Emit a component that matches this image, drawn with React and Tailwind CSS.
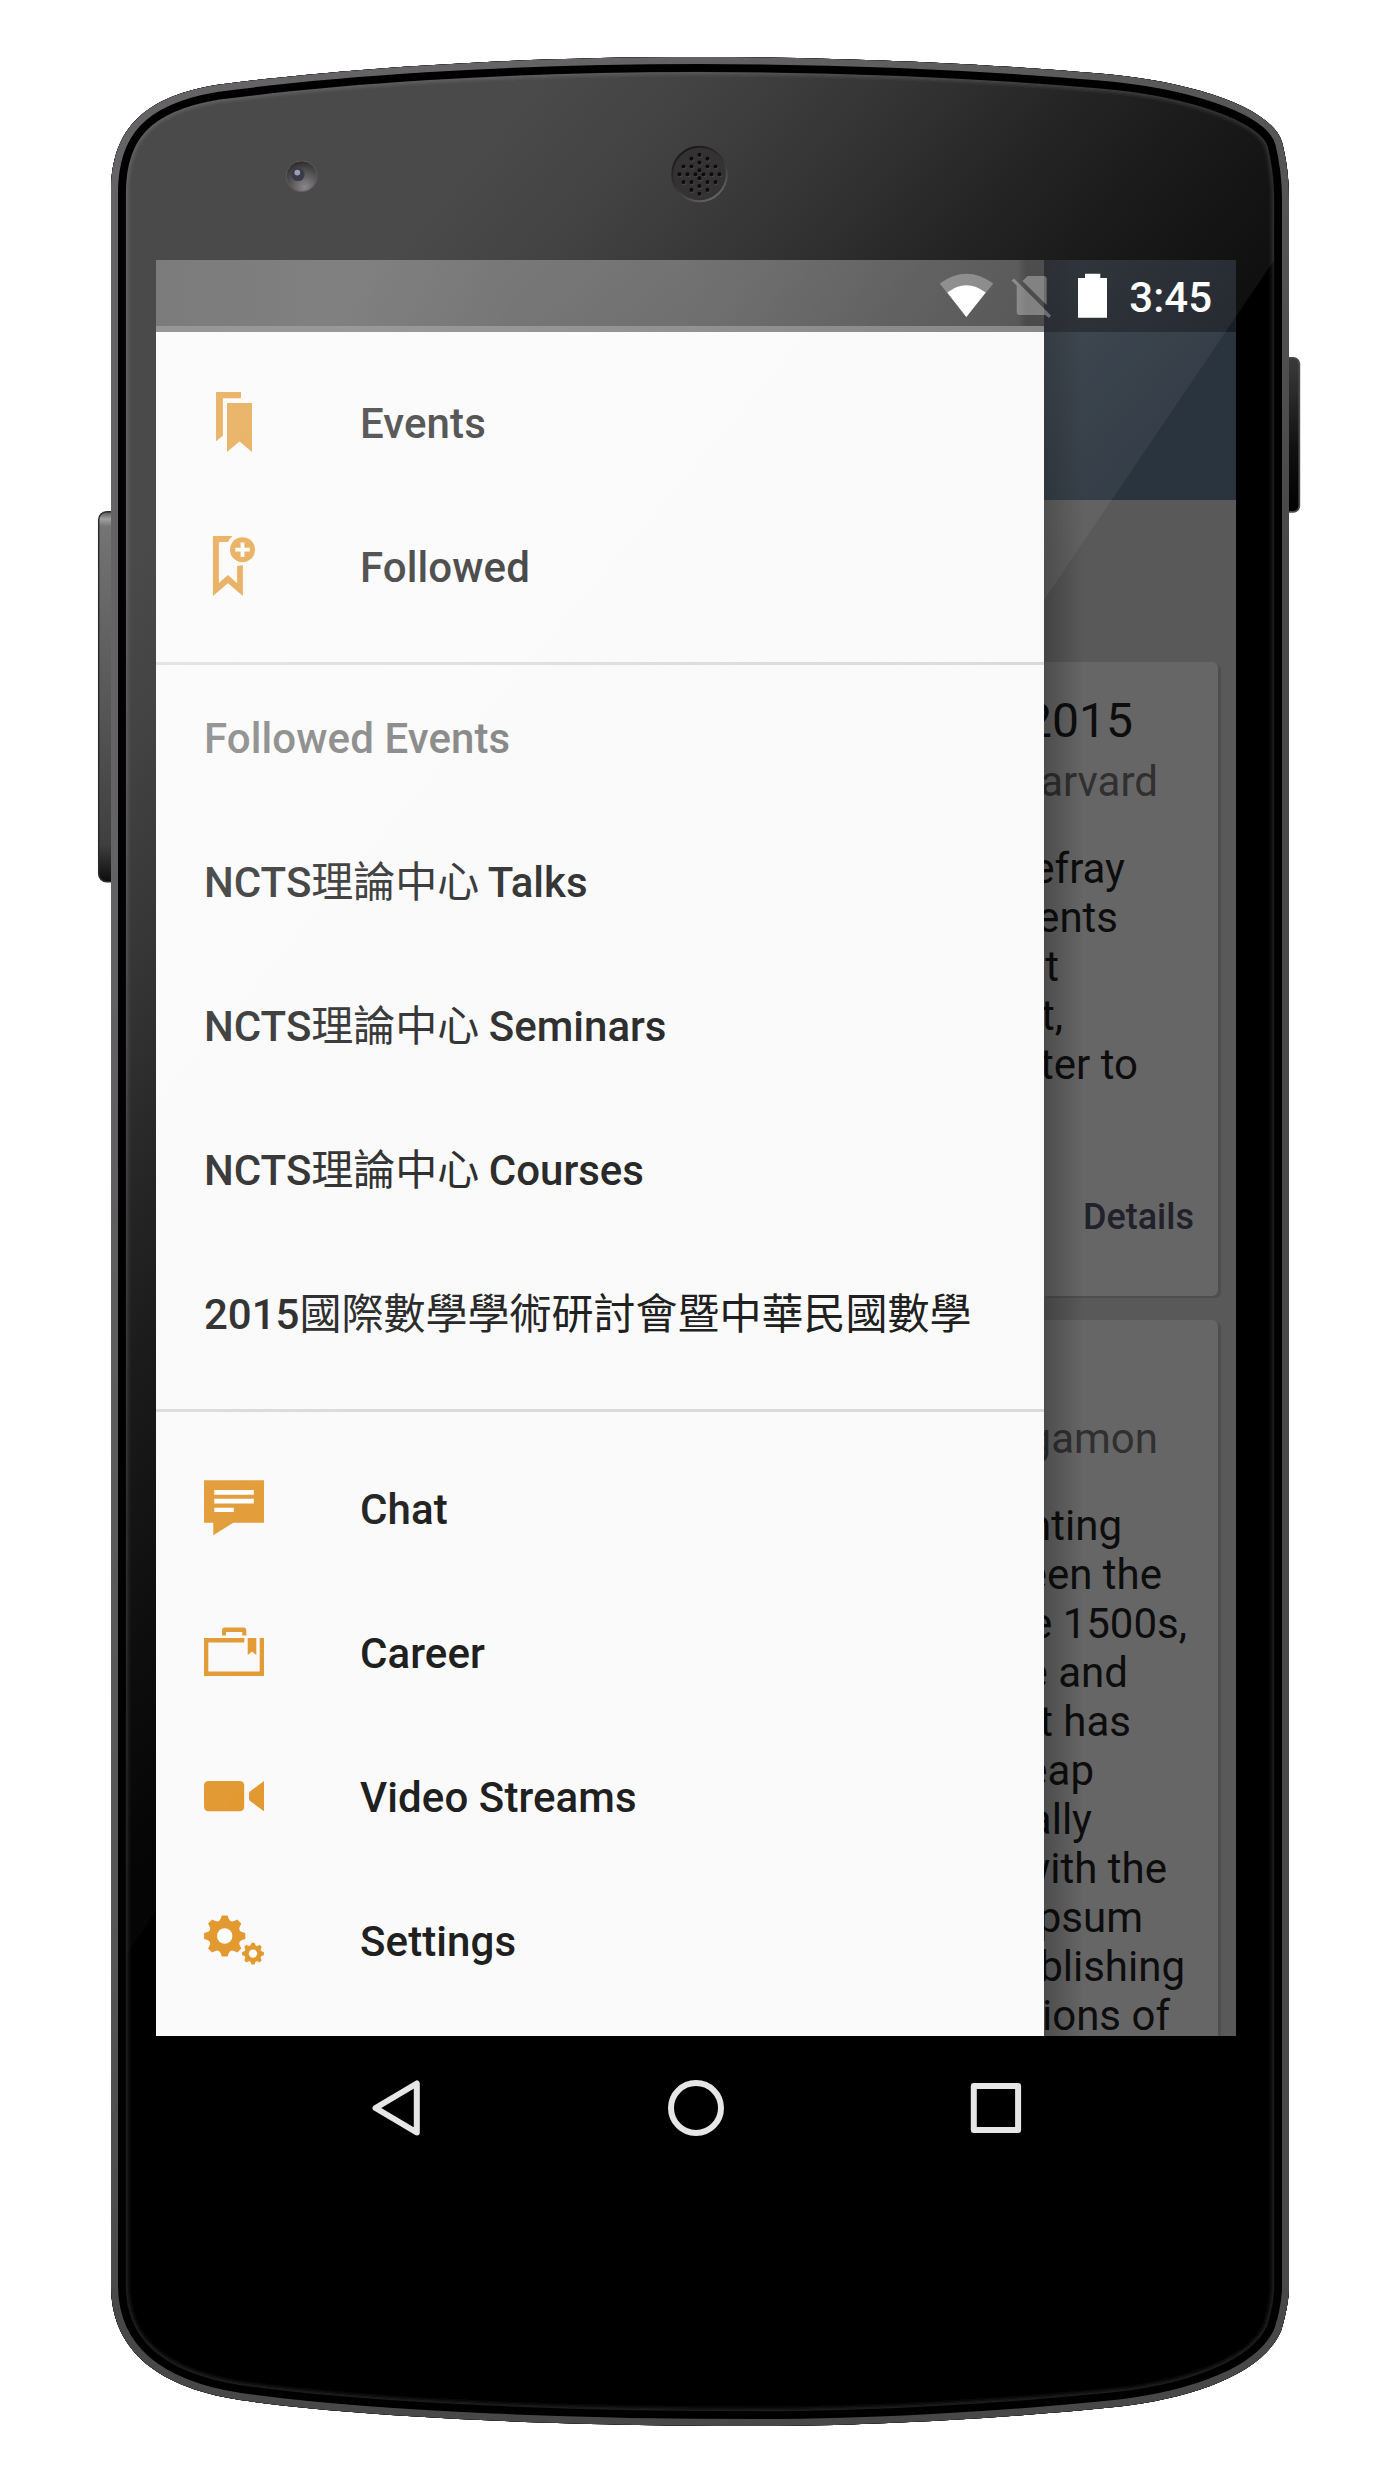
import React from "react";

const BODY =
  "M111 190 C112 134 138 98 216 85 C330 70 500 57 698 57 C860 57 1000 65 1100 73.5 C1180 80 1270 104 1282 142 C1286 158 1289 175 1289 200 V2291 C1288 2305 1284 2322 1281 2331 C1262 2375 1190 2398 1120 2406.5 C1000 2419 860 2426 760 2426 C600 2426 380 2420 240 2400 C150 2386 111 2345 111 2285 Z";

const SPEAKER_ROWS = [
  [-5, [0]],
  [-4, [-8, 8]],
  [-3, [0]],
  [-2, [-16, -8, 8, 16]],
  [-1, [0]],
  [0, [-20, -12, -4, 4, 12, 20]],
  [1, [0]],
  [2, [-16, -8, 8, 16]],
  [3, [0]],
  [4, [-8, 8]],
  [5, [0]],
];

function DeviceBody() {
  return (
    <svg className="absolute inset-0" width="1400" height="2489" viewBox="0 0 1400 2489">
      <defs>
        <clipPath id="body-clip">
          <path d={BODY} />
        </clipPath>
        <linearGradient id="frame" gradientUnits="userSpaceOnUse" x1="1200" y1="700" x2="473" y2="213">
          <stop offset="0" stopColor="#484848" />
          <stop offset="0.25" stopColor="#565556" />
          <stop offset="1" stopColor="#656365" />
        </linearGradient>
        <linearGradient id="volume" x1="0" y1="0" x2="0" y2="1">
          <stop offset="0" stopColor="#555" />
          <stop offset="0.02" stopColor="#a0a0a0" />
          <stop offset="0.04" stopColor="#747474" />
          <stop offset="0.4" stopColor="#5e5e5e" />
          <stop offset="0.9" stopColor="#3f3f3f" />
          <stop offset="1" stopColor="#0c0c0c" />
        </linearGradient>
        <linearGradient id="power" x1="0" y1="0" x2="0" y2="1">
          <stop offset="0" stopColor="#3a3a3a" />
          <stop offset="0.6" stopColor="#101010" />
          <stop offset="1" stopColor="#000" />
        </linearGradient>
        <filter id="soft" x="-5%" y="-5%" width="110%" height="110%">
          <feGaussianBlur stdDeviation="2" />
        </filter>
      </defs>
      <rect x="98.7" y="511.7" width="22" height="370" rx="8" fill="url(#volume)" stroke="#2c2c2c" strokeWidth="1.5" />
      <rect x="1276" y="357.8" width="23.3" height="154" rx="6" fill="url(#power)" stroke="#4a4a4a" strokeWidth="1.8" />
      <path d={BODY} fill="#000" />
      <g clipPath="url(#body-clip)">
        <path d={BODY} fill="none" stroke="#262626" strokeWidth="34" filter="url(#soft)" />
        <path d={BODY} fill="none" stroke="#1c1c1c" strokeWidth="31" />
        <path d={BODY} fill="none" stroke="#000" strokeWidth="29.5" />
        <path d={BODY} fill="none" stroke="url(#frame)" strokeWidth="14" />
      </g>
    </svg>
  );
}

/* Diagonal reflection that covers the upper left part of the glass. */
function Gloss() {
  return (
    <svg className="pointer-events-none absolute inset-0" width="1400" height="2489" viewBox="0 0 1400 2489">
      <defs>
        <linearGradient id="gloss" gradientUnits="userSpaceOnUse" x1="1143" y1="684" x2="495" y2="135">
          <stop offset="0" stopColor="#fff" stopOpacity="0.02" />
          <stop offset="0.153" stopColor="#fff" stopOpacity="0.05" />
          <stop offset="0.38" stopColor="#fff" stopOpacity="0.104" />
          <stop offset="0.514" stopColor="#fff" stopOpacity="0.145" />
          <stop offset="0.647" stopColor="#fff" stopOpacity="0.195" />
          <stop offset="0.86" stopColor="#fff" stopOpacity="0.262" />
          <stop offset="1" stopColor="#fff" stopOpacity="0.29" />
        </linearGradient>
        <radialGradient id="camera" cx="0.6" cy="0.85" r="0.85">
          <stop offset="0" stopColor="#8a868a" />
          <stop offset="0.5" stopColor="#5c595b" />
          <stop offset="1" stopColor="#2c2b2c" />
        </radialGradient>
        <linearGradient id="speaker-ring" x1="0.2" y1="0" x2="0.8" y2="1">
          <stop offset="0" stopColor="#151515" />
          <stop offset="0.5" stopColor="#333" />
          <stop offset="1" stopColor="#6a6a6a" />
        </linearGradient>
        <mask id="glass">
          <path d={BODY} fill="#fff" stroke="#000" strokeWidth="30" />
        </mask>
      </defs>
      <g mask="url(#glass)">
        <path d="M100 40 H1300 V222 L1044 600 L100 1993.500 Z" fill="url(#gloss)" />
      </g>
      <circle cx="301.700" cy="176.300" r="15.500" fill="url(#camera)" stroke="#5c5c5c" strokeWidth="1" />
      <circle cx="298" cy="174.500" r="6.600" fill="#3a3b48" />
      <circle cx="297.300" cy="172.600" r="2.900" fill="#9c9db0" />
      <circle cx="699.500" cy="174" r="27.300" fill="#343233" stroke="url(#speaker-ring)" strokeWidth="2" />
      {SPEAKER_ROWS.map(([row, xs]) =>
        xs.map((x) => (
          <g key={row + "," + x}>
            <circle cx={700 + x} cy={175 + row * 3.9} r="2.300" fill="#4c4c4c" />
            <circle cx={699.5 + x} cy={174.3 + row * 3.9} r="2.100" fill="#0c0c0c" />
          </g>
        ))
      )}
    </svg>
  );
}

function Icon({ children }) {
  return (
    <svg className="mb-1 block h-[60px] w-[60px] shrink-0 overflow-visible" viewBox="0 0 60 60" fill="#e29930">
      {children}
    </svg>
  );
}

function gearPath(cx, cy, R) {
  const pts = [];
  const at = (deg, r) => {
    const a = (deg * Math.PI) / 180;
    return (cx + r * Math.cos(a)).toFixed(2) + " " + (cy + r * Math.sin(a)).toFixed(2);
  };
  for (let k = 0; k < 8; k++) {
    const c = k * 45;
    pts.push((k ? "L" : "M") + at(c - 8, R), "L" + at(c + 8, R), "L" + at(c + 13, R * 0.85));
    pts.push("Q" + at(c + 22.5, R * 0.7) + " " + at(c + 32, R * 0.85));
  }
  return pts.join("") + "Z";
}

const EventsIcon = () => (
  <Icon>
    <path d="M12 0H37V6.200H18.900V43.700L12 49.200Z" />
    <path d="M23 11H48V60L35.500 49.500L23 60Z" />
  </Icon>
);

const FollowedIcon = () => (
  <Icon>
    <path d="M8.900 0H28.500Q25.500 2.500 23.900 5.900H14.900V46.900L23.900 39L33.100 47.200V29.700Q36 30 38.900 29V60L23.900 47.200L8.900 60Z" />
    <circle cx="38.500" cy="13.700" r="12.500" />
    <path d="M36.600 6.500h3.800v5.300h5.300v3.800h-5.300v5.500h-3.800v-5.500h-5.300v-3.800h5.300Z" fill="#fff" />
  </Icon>
);

const ChatIcon = () => (
  <Icon>
    <path d="M0 2.200H60V44.700H29.300L9.300 57.300V44.700H0Z" />
    <path d="M10.300 12.100H49.800V16.700H10.300ZM10.300 20.700H49.800V25.400H10.300ZM10.300 29.700H29.800V34.100H10.300Z" fill="#fff" />
  </Icon>
);

const CareerIcon = () => (
  <Icon>
    <path d="M18 13.600V8.500Q18 5.500 21 5.500H39.300Q42.300 5.500 42.300 8.500V13.600H38.300V10.100H22V13.600Z" />
    <path d="M0 15.900H40.300V20.500H4.300V49.500H55.700V15.900H60V54.100H0Z" />
    <path d="M43.700 15.900H52.300V33L48 29.600L43.700 33Z" />
  </Icon>
);

const VideoIcon = () => (
  <Icon>
    <rect x="0" y="15" width="40.200" height="30.200" rx="4.500" />
    <path d="M60 15V45.200L46 35Q45 34.200 45 33V27.500Q45 26.300 46 25.500Z" />
  </Icon>
);

const SettingsIcon = () => (
  <Icon>
    <path d={gearPath(20.7, 26, 20.8)} />
    <circle cx="20.700" cy="26" r="7.700" fill="#fff" />
    <path d={gearPath(49, 43.6, 11)} />
    <circle cx="49" cy="43.600" r="4.200" fill="#fff" />
  </Icon>
);

function MenuRow({ icon, label }) {
  return (
    <div className="flex h-36 items-center pl-12">
      {icon}
      <span className="mb-0.5 ml-24 leading-[49px] whitespace-nowrap">{label}</span>
    </div>
  );
}

function EventRow({ before, cjk, after }) {
  return (
    <div className="flex h-36 items-center pl-12">
      <div className="mb-[9px] flex h-[49px] items-baseline leading-[49px] tracking-normal whitespace-pre">
        <span>{before}</span>
        <span className="font-['Noto_Sans_CJK_TC',sans-serif] font-normal">{cjk}</span>
        {after && <span className="-ml-px">{after}</span>}
      </div>
    </div>
  );
}

function Divider() {
  return <div className="mt-[22px] h-[3px] bg-[#dadada]" />;
}

function Drawer() {
  return (
    <aside className="flex w-[888px] shrink-0 flex-col bg-[#fafafa] text-[42px] font-medium tracking-[0.1px] text-[#202020]">
      <div className="h-[66px] bg-[linear-gradient(90deg,#464646_0%,#4d4d4d_20%,#474747_40%,#4b4b4b_60%,#464646_97%,#363636_98%,#383838_100%)]" />
      <div className="h-[6px] bg-[linear-gradient(90deg,#6c6c6c,#7c7c7c)]" />
      <div className="pt-5">
        <MenuRow icon={<EventsIcon />} label="Events" />
        <MenuRow icon={<FollowedIcon />} label="Followed" />
      </div>
      <Divider />
      <div className="pt-[2px]">
        <div className="flex h-36 items-center pl-12 text-[#757575]">
          <span className="mb-0.5 leading-[49px]">Followed Events</span>
        </div>
        <EventRow before="NCTS" cjk="理論中心" after=" Talks" />
        <EventRow before="NCTS" cjk="理論中心" after=" Seminars" />
        <EventRow before="NCTS" cjk="理論中心" after=" Courses" />
        <EventRow before="2015" cjk="國際數學學術研討會暨中華民國數學" />
      </div>
      <Divider />
      <div className="pt-[26px]">
        <MenuRow icon={<ChatIcon />} label="Chat" />
        <MenuRow icon={<CareerIcon />} label="Career" />
        <MenuRow icon={<VideoIcon />} label="Video Streams" />
        <MenuRow icon={<SettingsIcon />} label="Settings" />
      </div>
    </aside>
  );
}

function Line({ text, pad }) {
  return (
    <div className={"flex h-[49px] shrink-0 items-center justify-end whitespace-nowrap " + pad}>
      <span>{text}</span>
    </div>
  );
}

const CARD =
  "w-[174px] overflow-hidden bg-[#666] text-[42px] leading-[49px] text-[#0d0d0d] shadow-[3px_2px_0_#4e4e4e]";

function Content() {
  return (
    <main className="relative flex w-[192px] flex-col overflow-hidden bg-[#595959]">
      <div className="h-[72px] shrink-0 bg-[#191e26]" />
      <div className="h-[168px] shrink-0 bg-[#2a343e]" />
      <section className={"mt-[162px] flex h-[634px] shrink-0 flex-col rounded-r-md pt-[30px] " + CARD}>
        <div className="flex h-[56px] items-center justify-end pr-[85px] text-[48px]">2015</div>
        <div className="mt-[9px] text-[#303030]">
          <Line text="arvard" pad="pr-[60px]" />
        </div>
        <div className="mt-[38px]">
          <Line text="efray" pad="pr-[93px]" />
          <Line text="ents" pad="pr-[100px]" />
          <Line text="t" pad="pr-[159px]" />
          <Line text="t," pad="pr-[155px]" />
          <Line text="ter to" pad="pr-[80px]" />
        </div>
        <div className="mt-[104px] flex h-[49px] items-center justify-end pr-[24px] text-[36px] font-medium text-[#21212b]">
          Details
        </div>
      </section>
      <section className={"mt-[24px] flex h-[740px] shrink-0 flex-col rounded-tr-md pt-[94px] " + CARD}>
        <div className="text-[#303030]">
          <Line text="gamon" pad="pr-[60px]" />
        </div>
        <div className="mt-[38px]">
          <Line text="nting" pad="pr-[96px]" />
          <Line text="een the" pad="pr-[56px]" />
          <Line text="e 1500s," pad="pr-[31px]" />
          <Line text="e and" pad="pr-[90px]" />
          <Line text="t has" pad="pr-[87px]" />
          <Line text="eap" pad="pr-[124px]" />
          <Line text="ally" pad="pr-[126px]" />
          <Line text="with the" pad="pr-[51px]" />
          <Line text="psum" pad="pr-[75px]" />
          <Line text="blishing" pad="pr-[33px]" />
          <Line text="ions of" pad="pr-[48px]" />
        </div>
      </section>
      <div className="absolute inset-y-0 left-0 w-10 bg-linear-to-r from-black/25 to-transparent" />
    </main>
  );
}

function StatusIcons() {
  return (
    <div className="absolute top-0 right-0 flex h-[72px] items-center pr-6 text-white">
      <svg width="174" height="72" viewBox="936 260 174 72" fill="#fff">
        <path d="M967.300 317L940.700 283.500Q967.300 264 994.300 283.500Z" opacity="0.3" />
        <path d="M967.300 317L948.300 292.600Q967.300 277.700 986.700 292.600Z" />
        <path
          d="M1012.500 280.500L1015 278.500L1052 315.500L1050 318L1046.300 315H1021Q1017.700 315 1017.700 311.700V285.500ZM1023.500 281L1028.500 276H1044.500Q1047.700 276 1047.700 279.200V305Z"
          opacity="0.3"
        />
        <path d="M1079 278H1086V273.700H1101.300V278H1108V317.700H1079Z" />
      </svg>
      <span className="ml-5 pt-[3px] text-[42px] leading-[49px] font-medium">3:45</span>
    </div>
  );
}

function NavBar() {
  return (
    <nav className="flex h-36 items-center justify-between bg-black px-[210px]">
      <svg width="60" height="60" viewBox="0 0 60 60" fill="none" stroke="#e6e6e6" strokeWidth="6" strokeLinejoin="round">
        <path d="M50.800 5.500V54.500L9.500 30Z" />
      </svg>
      <svg width="60" height="60" viewBox="0 0 60 60" fill="none" stroke="#e6e6e6" strokeWidth="6">
        <circle cx="30" cy="30" r="25" />
      </svg>
      <svg width="60" height="60" viewBox="0 0 60 60" fill="none" stroke="#e6e6e6" strokeWidth="6" strokeLinejoin="round">
        <rect x="7.800" y="8" width="44.300" height="44" />
      </svg>
    </nav>
  );
}

export default function App() {
  return (
    <div className="relative h-[2489px] w-[1400px] overflow-hidden bg-white pt-[260px] pl-[156px] font-[Roboto,'Noto_Sans_CJK_TC',sans-serif]">
      <DeviceBody />
      <div className="relative w-[1080px]">
        <div className="flex h-[1776px] overflow-hidden">
          <Drawer />
          <Content />
        </div>
        <StatusIcons />
        <NavBar />
      </div>
      <Gloss />
    </div>
  );
}
